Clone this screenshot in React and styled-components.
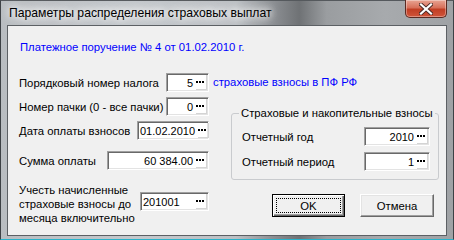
import React from "react";
import styled, { createGlobalStyle } from "styled-components";

const Global = createGlobalStyle`
  html, body { margin: 0; padding: 0; background: #2fb7cf; }
  body { font-family: "Liberation Sans", Arial, sans-serif; font-size: 11.3px; color: #000; }
  * { box-sizing: border-box; }
`;

const Window = styled.div`
  width: 454px;
  height: 240px;
  display: flex;
  flex-direction: column;
  padding-bottom: 3px;
  border: 1px solid #3d4145;
  border-bottom: 1px solid #28b4cc;
  border-top-color: #55595d;
  background: linear-gradient(90deg, #b9bdc1 0%, #c4c8cc 30%, #bcc0c4 52%, #8d9094 60%, #6f7275 66%, #9a9da0 72%, #a7aaad 85%, #9fa2a5 100%);
`;

const TitleBar = styled.div`
  height: 24px;
  display: flex;
  justify-content: space-between;
  align-items: flex-start;
  padding-left: 8px;
`;

const Title = styled.div`
  font-family: "Liberation Sans", Arial, sans-serif;
  font-size: 12.2px;
  line-height: 25px;
  color: #000;
  text-shadow: 0 0 6px #fff, 0 0 10px #fff, 0 0 14px rgba(255,255,255,0.9);
`;

const CloseButton = styled.div`
  width: 42px;
  height: 18px;
  margin-right: 6px;
  margin-top: -1px;
  border: 1px solid #5a2a22;
  border-top: none;
  border-radius: 0 0 5px 5px;
  background: linear-gradient(180deg, #e8a493 0%, #d7705a 45%, #c13e24 55%, #d0553a 100%);
  box-shadow: inset 0 0 0 1px rgba(255,255,255,0.35);
  display: flex;
  align-items: center;
  justify-content: center;
`;

const Client = styled.div`
  flex: 1;
  margin: 0 6px;
  border: 1px solid #5c6064;
  background: #f0f0f0;
  padding: 14px 0 0 11px;
  display: flex;
  flex-direction: column;
`;

const Header = styled.div`
  color: #0000ff;
  line-height: 14px;
  height: 14px;
  margin-left: 1px;
  white-space: nowrap;
`;

const Columns = styled.div`
  display: flex;
  margin-top: 19px;
`;

const LeftCol = styled.div`
  width: 190px;
  display: flex;
  flex-direction: column;
`;

const Row = styled.div`
  display: flex;
  justify-content: space-between;
  align-items: ${(p) => (p.$top ? "flex-start" : "center")};
  min-height: 19px;
  margin-top: ${(p) => p.$gap || 0}px;
`;

const Label = styled.div`
  line-height: 14px;
  white-space: nowrap;
`;

const FieldBox = styled.div`
  width: ${(p) => p.$w}px;
  height: 19px;
  flex-shrink: 0;
  margin-top: ${(p) => p.$mt || 0}px;
  background: #fff;
  border: 1px solid;
  border-color: #a0a0a0 #ffffff #ffffff #a0a0a0;
  box-shadow: inset 1px 1px 0 #696969, inset -1px -1px 0 #e3e3e3;
  display: flex;
  align-items: center;
  padding: 1px 1px 1px 2px;
  font-size: 11px;
`;

const FieldValue = styled.div`
  flex: 1;
  text-align: ${(p) => (p.$left ? "left" : "right")};
  padding-right: 3px;
  line-height: 14px;
  white-space: nowrap;
`;

const DotsButton = styled.div`
  width: 11px;
  height: 15px;
  flex-shrink: 0;
  display: flex;
  align-items: center;
  gap: 1px;
  border-right: 1px solid #d4d4d4;
  border-bottom: 1px solid #d4d4d4;
`;

const Dot = styled.span`
  width: 2px;
  height: 2px;
  background: #000;
`;

const RightCol = styled.div`
  flex: 1;
  margin-left: 2px;
  display: flex;
  flex-direction: column;
`;

const Suffix = styled.div`
  color: #0000ff;
  line-height: 19px;
  padding-left: 2px;
  white-space: nowrap;
`;

const Group = styled.fieldset`
  margin: 14px 0 0 20px;
  width: 208px;
  padding: 7px 8px 8px 10px;
  border: 1px solid #c9cbce;
  border-radius: 3px;
  min-width: 0;
  display: flex;
  flex-direction: column;
  gap: 6px;
`;

const Legend = styled.legend`
  padding: 0 2px;
  margin-left: -3px;
  line-height: 14px;
  white-space: nowrap;
`;

const GroupRow = styled.div`
  display: flex;
  justify-content: space-between;
  align-items: center;
  height: 19px;
`;

const Buttons = styled.div`
  display: flex;
  justify-content: flex-end;
  gap: 15px;
  padding-right: 12px;
  margin-top: 14px;
`;

const Button = styled.div`
  width: ${(p) => p.$w}px;
  height: 23px;
  background: #f0f0f0;
  border: 1px solid;
  border-color: ${(p) => (p.$default ? "#000 #000 #000 #000" : "#fff #696969 #696969 #fff")};
  box-shadow: ${(p) =>
    p.$default
      ? "inset 1px 1px 0 #fff, inset -1px -1px 0 #696969, inset -2px -2px 0 #a0a0a0"
      : "inset -1px -1px 0 #a0a0a0, inset 1px 1px 0 #e3e3e3"};
  display: flex;
  align-items: center;
  justify-content: center;
  padding: 3px;
`;

const Focus = styled.div`
  flex: 1;
  align-self: stretch;
  border: ${(p) => (p.$on ? "1px dotted #000" : "1px solid transparent")};
  display: flex;
  align-items: center;
  justify-content: center;
  line-height: 14px;
`;

function Field({ w, value, left, mt }) {
  return (
    <FieldBox $w={w} $mt={mt}>
      <FieldValue $left={left}>{value}</FieldValue>
      <DotsButton>
        <Dot />
        <Dot />
        <Dot />
      </DotsButton>
    </FieldBox>
  );
}

export default function App() {
  return (
    <>
      <Global />
      <Window>
        <TitleBar>
          <Title>Параметры распределения страховых выплат</Title>
          <CloseButton>
            <svg width="14" height="12" viewBox="0 0 14 12">
              <path d="M2 1.5 L12 10.5 M12 1.5 L2 10.5" stroke="#4a2a26" strokeWidth="4" strokeLinecap="square" />
              <path d="M2 1.5 L12 10.5 M12 1.5 L2 10.5" stroke="#ffffff" strokeWidth="2.2" strokeLinecap="square" />
            </svg>
          </CloseButton>
        </TitleBar>
        <Client>
          <Header>Платежное поручение № 4 от 01.02.2010 г.</Header>
          <Columns>
            <LeftCol>
              <Row>
                <Label>Порядковый номер налога</Label>
                <Field w={43} value="5" />
              </Row>
              <Row $gap={5}>
                <Label>Номер пачки (0 - все пачки)</Label>
                <Field w={43} value="0" />
              </Row>
              <Row $gap={5}>
                <Label>Дата оплаты взносов</Label>
                <Field w={72} value="01.02.2010" left />
              </Row>
              <Row $gap={11}>
                <Label>Сумма оплаты</Label>
                <Field w={102} value="60 384.00" />
              </Row>
              <Row $gap={13} $top>
                <Label>
                  Учесть начисленные
                  <br />
                  страховые взносы до
                  <br />
                  месяца включительно
                </Label>
                <Field w={69} value="201001" left mt={9} />
              </Row>
            </LeftCol>
            <RightCol>
              <Suffix>страховые взносы в ПФ РФ</Suffix>
              <Group>
                <Legend>Страховые и накопительные взносы</Legend>
                <GroupRow>
                  <Label>Отчетный год</Label>
                  <Field w={66} value="2010" />
                </GroupRow>
                <GroupRow>
                  <Label>Отчетный период</Label>
                  <Field w={66} value="1" />
                </GroupRow>
              </Group>
              <Buttons>
                <Button $w={73} $default>
                  <Focus $on>OK</Focus>
                </Button>
                <Button $w={74}>
                  <Focus>Отмена</Focus>
                </Button>
              </Buttons>
            </RightCol>
          </Columns>
        </Client>
      </Window>
    </>
  );
}
